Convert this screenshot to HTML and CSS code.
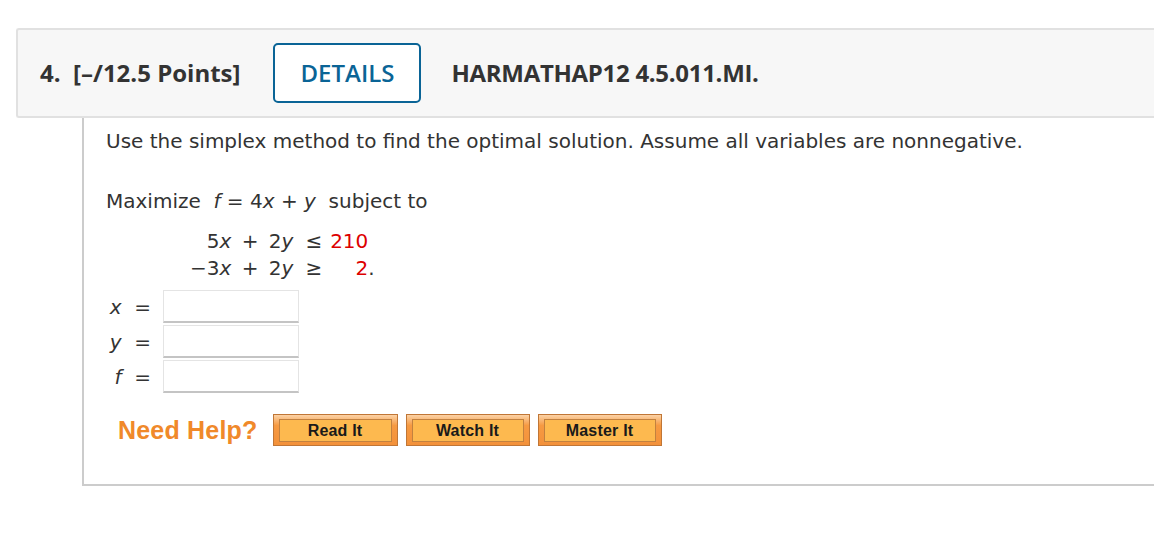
FILE: index.html
```html
<!DOCTYPE html>
<html>
<head>
<meta charset="utf-8">
<link rel="stylesheet" href="styles.css">
</head>
<body>
<div class="header">
  <span class="qtitle">4.&nbsp; [–/12.5 Points]</span>
  <span class="details">DETAILS</span>
  <span class="code">HARMATHAP12 4.5.011.MI.</span>
</div>
<div class="content">
  <p class="intro">Use the simplex method to find the optimal solution. Assume all variables are nonnegative.</p>
  <p class="objective">Maximize &nbsp;<i>f</i> = 4<i>x</i> + <i>y</i>&nbsp; subject to</p>
  <table class="cons">
    <tr><td class="lhs">5<i>x</i> + 2<i>y</i></td><td class="op">≤</td><td class="rhs"><span class="red">210</span></td><td class="dot"></td></tr>
    <tr><td class="lhs">−3<i>x</i> + 2<i>y</i></td><td class="op">≥</td><td class="rhs"><span class="red">2</span></td><td class="dot">.</td></tr>
  </table>
  <div class="answers">
    <div class="arow"><span class="lbl"><i>x</i> &nbsp;=</span><span class="inp"></span></div>
    <div class="arow"><span class="lbl"><i>y</i> &nbsp;=</span><span class="inp"></span></div>
    <div class="arow"><span class="lbl"><i>f</i> &nbsp;=</span><span class="inp"></span></div>
  </div>
  <div class="help">
    <span class="need">Need Help?</span>
    <span class="hbtn b1"><span class="hin">Read It</span></span>
    <span class="hbtn b2"><span class="hin">Watch It</span></span>
    <span class="hbtn b3"><span class="hin">Master It</span></span>
  </div>
</div>
</body>
</html>
```
FILE: styles.css
```css
html, body { margin: 0; padding: 0; background: #fff; }
body { padding-top: 28px; overflow: hidden; }

.header {
  margin-left: 16px;
  height: 84px;
  padding-bottom: 2px;
  border: 2px solid #e1e1e1;
  border-right: none;
  border-radius: 3px 0 0 3px;
  background: #f7f7f7;
  display: flex;
  align-items: center;
  padding-left: 22px;
  font-family: "Open Sans", sans-serif;
  font-weight: 700;
  color: #333;
  font-size: 24px;
}
.qtitle { margin-right: 33px; }
.details {
  box-sizing: border-box;
  width: 148px;
  height: 60px;
  margin-top: 2px;
  border: 2px solid #0a6496;
  border-radius: 5px;
  background: #fff;
  color: #0a6496;
  font-weight: 600;
  font-size: 24px;
  display: flex;
  align-items: center;
  justify-content: center;
  padding-bottom: 2px;
  margin-right: 30px;
}
.code { font-weight: 700; letter-spacing: -0.3px; }

.content {
  margin-left: 82px;
  height: 366px;
  border-left: 2px solid #cccccc;
  border-bottom: 2px solid #cccccc;
  padding-left: 22px;
  font-family: "DejaVu Sans", Verdana, sans-serif;
  font-size: 20px;
  color: #333;
}
.intro { margin: 0; padding-top: 10px; line-height: 26px; }
.objective { margin: 34px 0 0 0; line-height: 26px; }
.cons { border-collapse: collapse; margin-left: 84px; margin-top: 14px; }
.cons td { padding: 0; line-height: 27px; font-size: 20px; white-space: nowrap; }
.cons .lhs { text-align: right; word-spacing: 4px; }
.cons .op { padding: 0 8px 0 12px; }
.cons .rhs { text-align: right; }
.cons .dot { width: 8px; }
.red { color: #d00; }

.answers { margin-top: 7px; }
.arow { display: flex; align-items: center; height: 35px; }
.lbl { width: 45px; text-align: right; white-space: nowrap; }
.inp {
  box-sizing: border-box;
  width: 136px;
  height: 33px;
  margin-left: 12px;
  border: 1px solid #e4e4e4;
  border-bottom: 2px solid #c4c4c4;
  background: #fff;
}

.help { display: flex; align-items: center; margin-top: 20px; margin-left: 12px; }
.need {
  font-family: "Liberation Sans", Arial, sans-serif;
  font-weight: 700;
  font-size: 25px;
  color: #f0892a;
  margin-right: 15px;
  letter-spacing: 0.2px;
}
.hbtn {
  box-sizing: border-box;
  height: 32px;
  border: 1px solid #c07636;
  background: linear-gradient(#fbd2a6 0%, #f69a42 35%, #f3913a 100%);
  padding: 4px 5px 3px 5px;
  margin-right: 8px;
  display: flex;
}
.hin {
  box-sizing: border-box;
  width: 100%;
  border: 1px solid #c2813f;
  background: #fdb94f;
  font-family: "Liberation Sans", Arial, sans-serif;
  font-weight: 700;
  font-size: 16px;
  letter-spacing: 0.2px;
  color: #1a1a1a;
  display: flex;
  align-items: center;
  justify-content: center;
}
.b1 { width: 125px; }
.b2 { width: 124px; }
.b3 { width: 124px; }
```
